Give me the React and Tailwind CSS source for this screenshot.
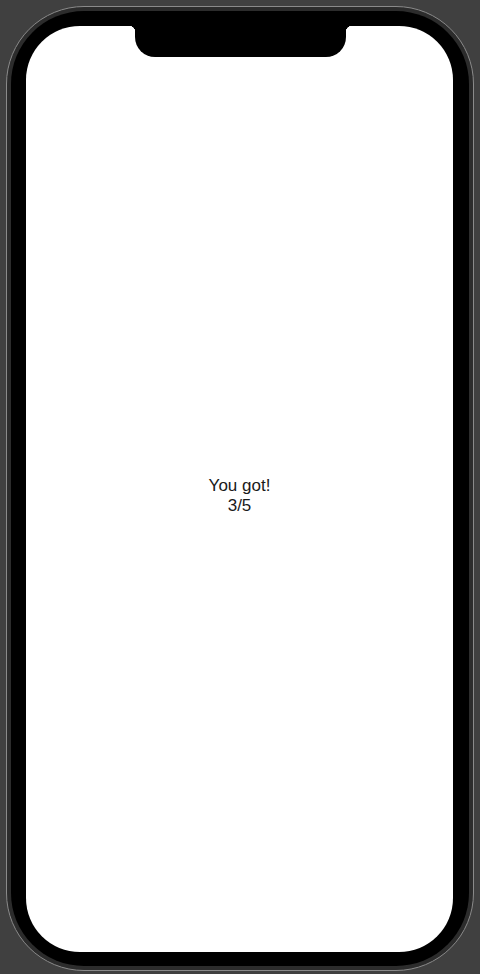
export default function App() {
  return (
    <div className="w-[480px] h-[974px] bg-[#404040] pl-[6px] pt-[6px] overflow-hidden">
      {/* device frame */}
      <div className="w-[468px] h-[965px] rounded-[78px] border border-[#8a8a8a] bg-[#2c2c2c] p-[4px]">
        <div className="w-full h-full rounded-[73px] bg-black pt-[15px] pb-[14px] pl-[15px] pr-[16px]">
          {/* screen */}
          <div className="flex flex-col w-[427px] h-[926px] rounded-[54px] bg-white overflow-hidden">
            {/* notch */}
            <div className="relative ml-[109px] w-[211px] h-[31px] shrink-0 bg-black rounded-b-[20px]">
              <div className="absolute -left-[6px] top-0 w-[6px] h-[6px] bg-[radial-gradient(circle_at_0_100%,transparent_6px,black_6.5px)]" />
              <div className="absolute -right-[6px] top-0 w-[6px] h-[6px] bg-[radial-gradient(circle_at_100%_100%,transparent_6px,black_6.5px)]" />
            </div>
            <div className="flex flex-1 flex-col items-center justify-center pt-[14px] pb-[31px]">
              <p
                className="text-[17px] leading-[20px] text-[#1a1a1a] text-center"
                style={{ fontFamily: '"Liberation Sans", Arial, sans-serif' }}
              >
                You got!
                <br />
                3/5
              </p>
            </div>
          </div>
        </div>
      </div>
    </div>
  );
}
